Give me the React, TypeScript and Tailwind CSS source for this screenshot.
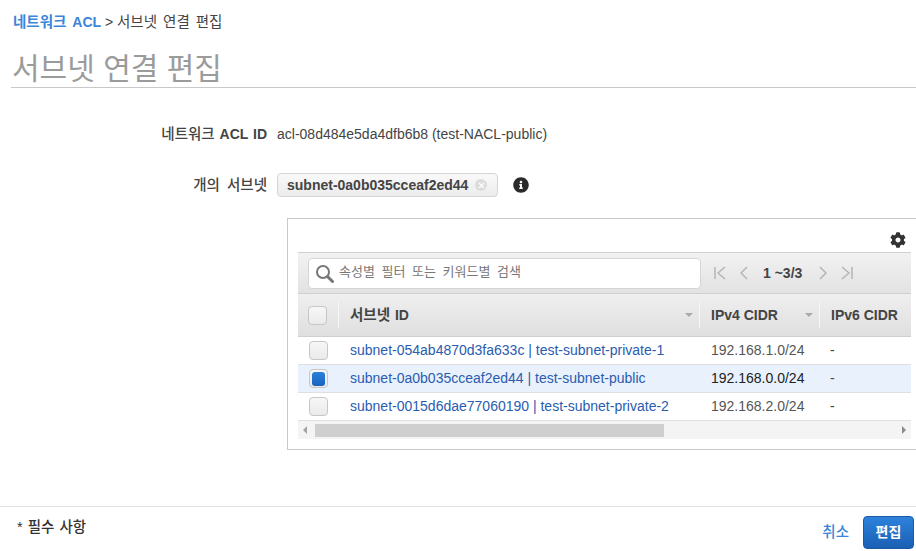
import { X } from "lucide-react";
import { FaCog, FaInfoCircle } from "react-icons/fa";

const rows = [
  { id: "subnet-054ab4870d3fa633c | test-subnet-private-1", cidr: "192.168.1.0/24", selected: false },
  { id: "subnet-0a0b035cceaf2ed44 | test-subnet-public", cidr: "192.168.0.0/24", selected: true },
  { id: "subnet-0015d6dae77060190 | test-subnet-private-2", cidr: "192.168.2.0/24", selected: false },
];

const Check = ({ selected }: { selected: boolean }) => (
  <div className="flex h-[19px] w-[19px] items-center justify-center rounded-[4px] border border-[#c6c6c6] bg-[linear-gradient(180deg,#f7f7f7,#eaeaea)]">
    {selected && <div className="h-[14px] w-[13px] rounded-[3px] bg-[linear-gradient(180deg,#2b7fdc,#1a62bd)]" />}
  </div>
);

const SortCaret = () => (
  <div className="h-0 w-0 border-x-[4px] border-t-[4px] border-x-transparent border-t-[#aaaaaa]" />
);

export default function App() {
  return (
    <div
      className="flex h-[551px] w-[916px] flex-col overflow-hidden bg-white text-[14px] text-[#444444]"
      style={{ fontFamily: '"Liberation Sans", "Noto Sans CJK KR", sans-serif' }}
    >
      <div className="flex-1">
        <div className="pl-[13px] pt-[14px] leading-[17px]">
          <span className="font-bold text-[#3b86d8] [word-spacing:2px]">
            <span className="text-[14.5px]">네트워크</span> ACL
          </span>
          <span> &gt; </span>
          <span className="text-[14.5px] [word-spacing:2px]">서브넷 연결 편집</span>
        </div>

        <div className="ml-[11px] mt-[17px] h-[40px] border-b border-[#c8c8c8] pl-px text-[30px] leading-[42px] text-[#9b9b9b]">
          서브넷 연결 편집
        </div>

        <div className="mt-[36px] flex items-center">
          <div className="w-[267px] text-right font-medium leading-[20px] [word-spacing:1px]">
            <span className="text-[14.5px]">네트워크</span> <span className="font-bold">ACL ID</span>
          </div>
          <div className="ml-[10px] leading-[20px]">acl-08d484e5da4dfb6b8 (test-NACL-public)</div>
        </div>

        <div className="mt-[29px] flex items-center">
          <div className="w-[267px] text-right text-[14.5px] font-medium leading-[24px] [word-spacing:3px]">개의 서브넷</div>
          <div className="ml-[10px] flex h-[24px] w-[221px] items-center rounded-[4px] border border-[#d5d5d5] bg-[linear-gradient(180deg,#f9f9f9,#ececec)] pl-[9px]">
            <span className="font-bold leading-none text-[#444444]">subnet-0a0b035cceaf2ed44</span>
            <span className="ml-[7px] flex h-[12px] w-[12px] items-center justify-center rounded-full bg-[#dcdcdc]">
              <X className="h-[9px] w-[9px] text-white" strokeWidth={3} />
            </span>
          </div>
          <FaInfoCircle className="ml-[15px] h-[16px] w-[16px] text-[#2b2b2b]" />
        </div>

        <div className="ml-[287px] mt-[21px] h-[232px] w-[640px] border border-[#c8c8c8] pl-[10px]">
          <div className="flex h-[33px] w-[613px] items-end justify-end pb-[4px] pr-[5px]">
            <FaCog className="h-[16px] w-[16px] text-[#333333]" />
          </div>

          <div className="w-[613px]">
            <div className="flex h-[42px] items-center border-y border-[#d0d0d0] bg-[linear-gradient(180deg,#f2f2f2,#e2e2e2)] pl-[10px]">
              <div className="flex h-[31px] w-[393px] items-center rounded-[4px] border border-[#d5d5d5] bg-white pl-[6px]">
                <svg className="h-[19px] w-[19px] text-[#777777]" viewBox="0 0 19 19" fill="none" stroke="currentColor">
                  <circle cx="8" cy="8" r="6" strokeWidth="2" />
                  <path d="m12.5 12.5 5 5" strokeWidth="3" strokeLinecap="round" />
                </svg>
                <span className="mb-[3px] ml-[5px] text-[13px] leading-none text-[#777777] [word-spacing:3px]">속성별 필터 또는 키워드별 검색</span>
              </div>
              <div className="ml-[13px] flex items-center text-[#b5b5b5]">
                <svg className="h-[14px] w-[12px]" viewBox="0 0 12 14" fill="none" stroke="currentColor" strokeWidth="1.5">
                  <path d="M1 1v12M11 1 4 7l7 6" />
                </svg>
                <svg className="ml-[14px] h-[14px] w-[8px]" viewBox="0 0 8 14" fill="none" stroke="currentColor" strokeWidth="1.5">
                  <path d="M7 1 1 7l6 6" />
                </svg>
                <span className="ml-[15px] w-[43px] whitespace-nowrap text-[14px] font-bold leading-none text-[#444444]">1 ~3/3</span>
                <svg className="ml-[13px] h-[14px] w-[8px]" viewBox="0 0 8 14" fill="none" stroke="currentColor" strokeWidth="1.5">
                  <path d="m1 1 6 6-6 6" />
                </svg>
                <svg className="ml-[14px] h-[14px] w-[12px]" viewBox="0 0 12 14" fill="none" stroke="currentColor" strokeWidth="1.5">
                  <path d="M11 1v12M1 1l7 6-7 6" />
                </svg>
              </div>
            </div>

            <div className="flex h-[43px] items-center border-b border-[#d0d0d0] bg-[linear-gradient(180deg,#efefef,#dfdfdf)] font-bold">
              <div className="flex h-full w-[40px] items-center pl-[10px]">
                <Check selected={false} />
              </div>
              <div className="flex h-[26px] w-[361px] items-center justify-between border-l border-[#f7f7f7] pl-[11px] pr-[6px]">
                <span className="pt-px [word-spacing:1px]">
                  <span className="text-[14.5px]">서브넷</span> ID
                </span>
                <SortCaret />
              </div>
              <div className="flex h-[26px] w-[120px] items-center justify-between border-l border-[#f7f7f7] pl-[11px] pr-[6px]">
                <span>IPv4 CIDR</span>
                <SortCaret />
              </div>
              <div className="flex h-[26px] flex-1 items-center border-l border-[#f7f7f7] pl-[11px]">
                <span>IPv6 CIDR</span>
              </div>
            </div>

            {rows.map((row) => (
              <div
                key={row.id}
                className={`flex h-[28px] items-center border-b border-[#dfdfdf] ${row.selected ? "bg-[#e9f1fc]" : "bg-white"}`}
              >
                <div className="flex w-[40px] pl-[11px]">
                  <Check selected={row.selected} />
                </div>
                <div className="w-[361px] pl-[12px] text-[#2a5cb0]">{row.id}</div>
                <div className={`w-[120px] pl-[12px] ${row.selected ? "text-[#222222]" : "text-[#555555]"}`}>{row.cidr}</div>
                <div className="pl-[11px]">-</div>
              </div>
            ))}

            <div className="flex h-[18px] items-center bg-[#f4f4f4]">
              <div className="ml-[5px] h-0 w-0 border-y-[4px] border-r-[4px] border-y-transparent border-r-[#a3a3a3]" />
              <div className="ml-[8px] h-[13px] w-[349px] bg-[#cfcfcf]" />
              <div className="ml-auto mr-[5px] h-0 w-0 border-y-[4px] border-l-[4px] border-y-transparent border-l-[#8a8a8a]" />
            </div>
          </div>
        </div>
      </div>

      <div className="flex h-[45px] items-start border-t border-[#e0e0e0]">
        <div className="ml-[17px] mt-[11px] text-[14.5px] font-medium leading-[18px] text-[#333333] [word-spacing:1px]">* 필수 사항</div>
        <div className="ml-auto mr-[2px] mt-[9px] flex items-center">
          <span className="text-[14.5px] font-medium text-[#3b86d8]">취소</span>
          <div className="ml-[14px] flex h-[33px] w-[51px] items-center justify-center rounded-[4px] border border-[#1a5aa5] bg-[linear-gradient(180deg,#2d82dc,#1a5fb4)] font-bold text-white">
            편집
          </div>
        </div>
      </div>
    </div>
  );
}
